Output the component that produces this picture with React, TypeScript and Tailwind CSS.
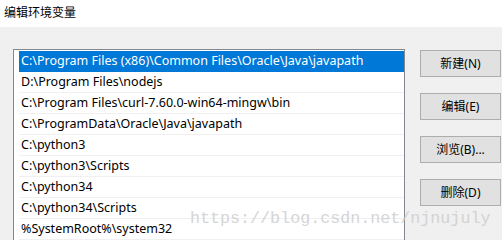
import React from 'react'

const paths = [
  'C:\\Program Files (x86)\\Common Files\\Oracle\\Java\\javapath',
  'D:\\Program Files\\nodejs',
  'C:\\Program Files\\curl-7.60.0-win64-mingw\\bin',
  'C:\\ProgramData\\Oracle\\Java\\javapath',
  'C:\\python3',
  'C:\\python3\\Scripts',
  'C:\\python34',
  'C:\\python34\\Scripts',
  '%SystemRoot%\\system32',
]

const buttons = ['新建(N)', '编辑(E)', '浏览(B)...', '删除(D)']

export default function App() {
  return (
    <div
      className="relative w-[502px] h-[240px] overflow-hidden bg-[#f0f0f0] text-[12px] text-black"
      style={{ fontFamily: '"Segoe UI", "Noto Sans", "Noto Sans CJK SC", sans-serif' }}
    >
      <div className="h-[27px] bg-white pl-[4px] pt-[4px] text-[12px] leading-[18px]">编辑环境变量</div>

      <div className="flex pl-[13px] pt-[22px]">
        <div className="w-[392px] h-[200px] shrink-0 border border-[#828790] bg-white pl-[5px] pt-[1px] text-[12.5px]">
          {paths.map((p, i) => (
            <div
              key={i}
              className={
                i === 0
                  ? 'h-[21px] pl-[2px] leading-[20px] bg-[#0078d7] text-white border-b border-[#0078d7] whitespace-nowrap'
                  : 'h-[21px] pl-[2px] leading-[20px] border-b border-[#f0f0f0] whitespace-nowrap'
              }
            >
              {p}
            </div>
          ))}
        </div>

        <div className="ml-[15px] flex flex-col gap-[16px] pt-[1px]">
          {buttons.map((b) => (
            <div
              key={b}
              className="w-[81px] h-[27px] flex items-center justify-center border border-[#adadad] bg-[#e1e1e1]"
            >
              {b}
            </div>
          ))}
        </div>
      </div>

      <div
        className="absolute left-[190px] top-[207px] text-[16.7px] leading-[24px] text-[#cccccc] opacity-80 pointer-events-none whitespace-nowrap"
        style={{ fontFamily: '"Liberation Mono", monospace' }}
      >
        https://blog.csdn.net/njnujuly
      </div>
    </div>
  )
}
